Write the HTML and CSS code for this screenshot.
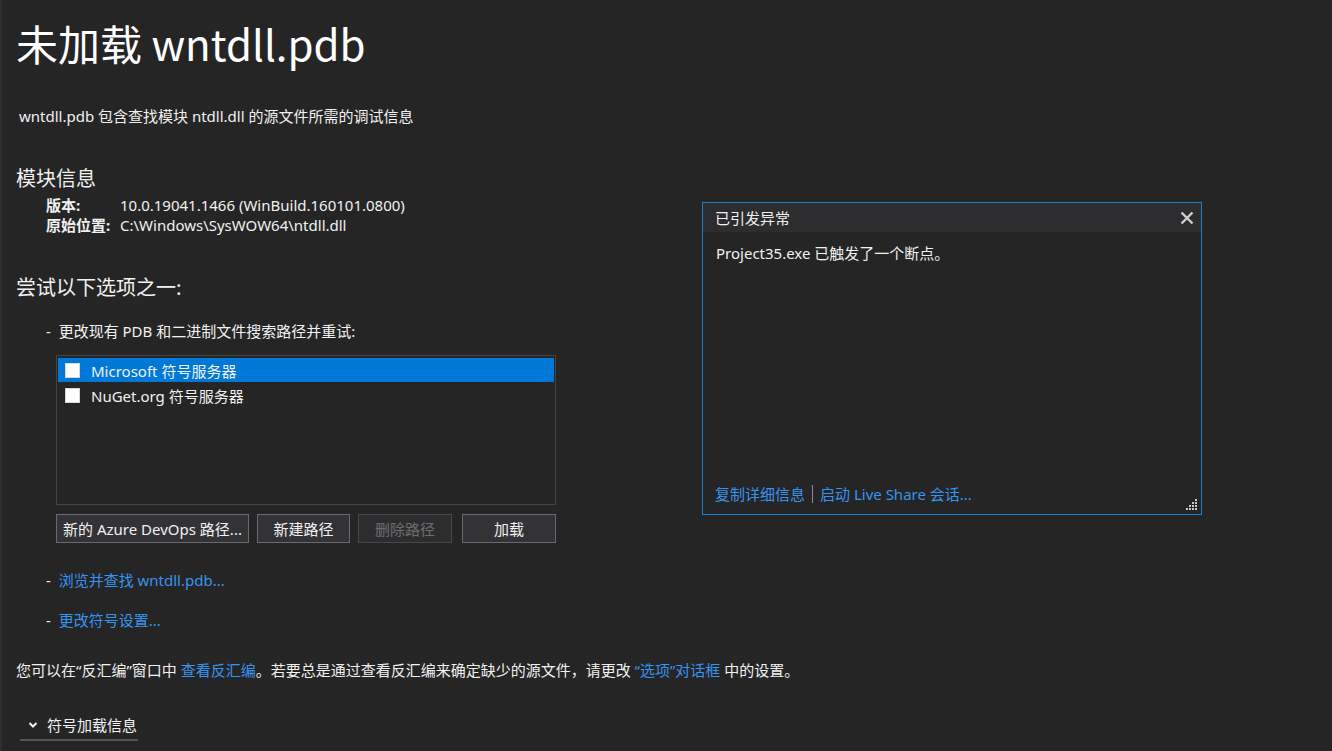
FILE: index.html
```html
<!DOCTYPE html>
<html lang="zh-CN">
<head>
<meta charset="utf-8">
<link rel="stylesheet" href="styles.css">
</head>
<body>
<div class="page">
  <h1 class="title">未加载 wntdll.pdb</h1>
  <p class="subtitle">wntdll.pdb 包含查找模块 ntdll.dll 的源文件所需的调试信息</p>

  <h2 class="heading">模块信息</h2>
  <div class="info">
    <div class="info-row"><span class="label">版本:</span><span>10.0.19041.1466 (WinBuild.160101.0800)</span></div>
    <div class="info-row"><span class="label">原始位置:</span><span>C:\Windows\SysWOW64\ntdll.dll</span></div>
  </div>

  <h2 class="heading heading-try">尝试以下选项之一:</h2>
  <div class="option">-&nbsp; 更改现有 PDB 和二进制文件搜索路径并重试:</div>

  <div class="listbox">
    <div class="list-row selected"><span class="check"></span><span>Microsoft 符号服务器</span></div>
    <div class="list-row"><span class="check"></span><span>NuGet.org 符号服务器</span></div>
  </div>

  <div class="buttons">
    <button class="btn btn-azure">新的 Azure DevOps 路径...</button>
    <button class="btn btn-new">新建路径</button>
    <button class="btn btn-del" disabled>删除路径</button>
    <button class="btn btn-load">加载</button>
  </div>

  <div class="option option-link1">-&nbsp; <a class="link">浏览并查找 wntdll.pdb...</a></div>
  <div class="option option-link2">-&nbsp; <a class="link">更改符号设置...</a></div>

  <p class="para">您可以在“反汇编”窗口中 <a class="link">查看反汇编</a>。若要总是通过查看反汇编来确定缺少的源文件，请更改 <a class="link">“选项”对话框</a> 中的设置。</p>

  <div class="details">
    <svg class="chev" width="10" height="8" viewBox="0 0 10 8"><path d="M1.5 2 L5 5.5 L8.5 2" fill="none" stroke="#f1f1f1" stroke-width="2"/></svg>
    <span>符号加载信息</span>
  </div>
</div>

<div class="popup">
  <div class="popup-head">
    <span>已引发异常</span>
    <svg class="close" width="14" height="14" viewBox="0 0 14 14"><path d="M1.5 1.5 L12.5 12.5 M12.5 1.5 L1.5 12.5" stroke="#d0d0d0" stroke-width="2.4"/></svg>
  </div>
  <div class="popup-body">Project35.exe 已触发了一个断点。</div>
  <div class="popup-foot">
    <a class="link">复制详细信息</a><span class="sep"></span><a class="link">启动 Live Share 会话...</a>
  </div>
  <svg class="grip" width="12" height="12" viewBox="0 0 12 12" fill="#c8c8c8">
    <rect x="9" y="0" width="2" height="2"/>
    <rect x="6" y="3" width="2" height="2"/><rect x="9" y="3" width="2" height="2"/>
    <rect x="3" y="6" width="2" height="2"/><rect x="6" y="6" width="2" height="2"/><rect x="9" y="6" width="2" height="2"/>
    <rect x="0" y="9" width="2" height="2"/><rect x="3" y="9" width="2" height="2"/><rect x="6" y="9" width="2" height="2"/><rect x="9" y="9" width="2" height="2"/>
  </svg>
</div>
</body>
</html>
```

FILE: styles.css
```css
* { box-sizing: border-box; }
html, body { margin: 0; padding: 0; }
body {
  background: #252526;
  color: #f1f1f1;
  font-family: "Noto Sans", "Noto Sans CJK SC", sans-serif;
  font-size: 15px;
  width: 1332px;
  height: 751px;
  overflow: hidden;
  border-left: 2px solid #2d2d30;
  position: relative;
}
.page {
  padding-left: 14px;
  display: flex;
  flex-direction: column;
  align-items: flex-start;
}
.title {
  margin: 18px 0 0 0;
  font-family: "Noto Sans CJK SC", sans-serif;
  font-size: 42px;
  font-weight: 400;
  line-height: 50px;
  color: #ffffff;
}
.subtitle {
  margin: 38px 0 0 3px;
  line-height: 20px;
}
.heading {
  margin: 38px 0 0 0;
  font-size: 20px;
  font-weight: 400;
  line-height: 28px;
  font-family: "Noto Sans CJK SC", sans-serif;
}
.info {
  margin: 3px 0 0 30px;
  display: flex;
  flex-direction: column;
}
.info-row {
  display: flex;
  line-height: 20px;
}
.label {
  font-weight: 700;
  width: 74px;
}
.heading-try { margin-top: 38px; }
.option {
  margin: 20px 0 0 30px;
  line-height: 20px;
}
.listbox {
  margin: 14px 0 0 40px;
  width: 500px;
  height: 150px;
  border: 1px solid #434346;
  padding: 2px 1px;
  display: flex;
  flex-direction: column;
}
.list-row {
  height: 25px;
  display: flex;
  align-items: center;
  gap: 11px;
  padding-left: 7px;
}
.list-row.selected { background: #0078d7; height: 24px; margin-bottom: 1px; }
.check {
  width: 15px;
  height: 15px;
  background: #ffffff;
  border: 1px solid #d8d8d8;
  flex: none;
}
.buttons {
  margin: 9px 0 0 40px;
  display: flex;
  gap: 8px;
}
.btn {
  height: 29px;
  background: #333337;
  border: 1px solid #6b6b6e;
  color: #f1f1f1;
  font-family: inherit;
  font-size: 15px;
  padding: 0;
  white-space: nowrap;
}
.btn-azure { width: 193px; }
.btn-new { width: 93px; }
.btn-del { width: 94px; color: #6d6d6d; border-color: #48484b; background: #2d2d30; }
.btn-load { width: 94px; margin-left: 2px; }
.link { color: #3794ef; text-decoration: none; }
.option-link1 { margin-top: 27px; }
.option-link2 { margin-top: 20px; }
.para {
  margin: 30px 0 0 0;
  line-height: 20px;
}
.details {
  margin: 35px 0 0 4px;
  display: flex;
  align-items: center;
  gap: 9px;
  padding: 0 0 4px 8px;
  border-bottom: 2px solid #555558;
  width: 118px;
  line-height: 20px;
}
.chev { flex: none; }

.popup {
  position: absolute;
  left: 700px;
  top: 202px;
  width: 500px;
  height: 313px;
  border: 1px solid #1c7fd0;
  background: #252526;
  display: flex;
  flex-direction: column;
}
.popup-head {
  height: 29px;
  background: #2d2d30;
  display: flex;
  align-items: center;
  justify-content: space-between;
  padding: 0 7px 0 12px;
}
.popup-body {
  margin-top: 11px;
  padding-left: 13px;
  line-height: 20px;
}
.popup-foot {
  margin-top: auto;
  margin-bottom: 10px;
  padding-left: 12px;
  display: flex;
  align-items: center;
  line-height: 20px;
}
.sep {
  width: 1px;
  height: 18px;
  background: #8a8a8a;
  margin: 0 7px;
}
.grip {
  position: absolute;
  right: 3px;
  bottom: 3px;
}
```
